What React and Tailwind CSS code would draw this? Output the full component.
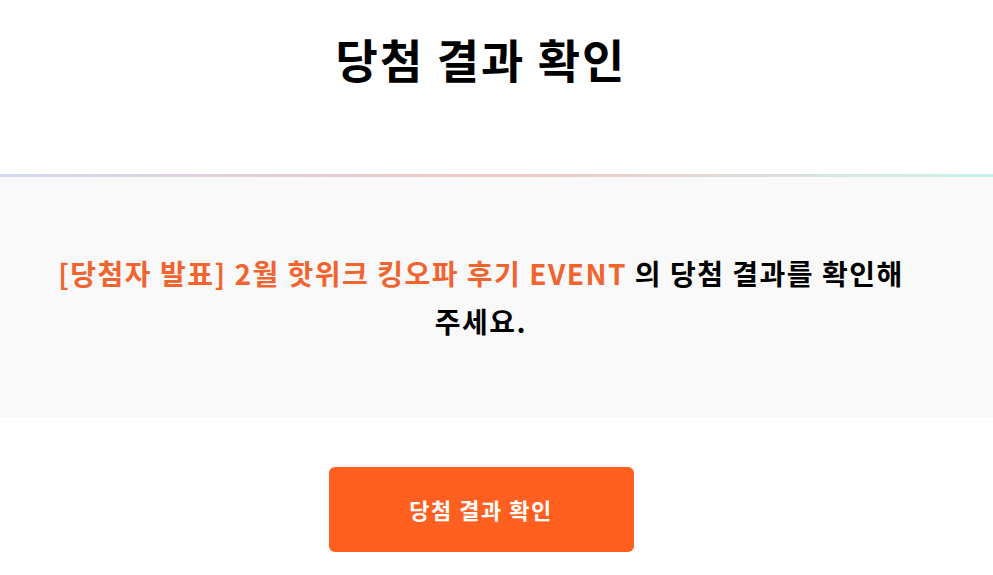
import React from "react";

const font = {
  fontFamily: '"Noto Sans CJK KR", "Noto Sans", sans-serif',
};

export default function App() {
  return (
    <div className="w-[993px] min-h-[575px] bg-white" style={font}>
      <div className="w-[962px] pt-[25px] pb-[83px] text-center">
        <h1 className="text-[46px] leading-[66px] font-bold tracking-[2px] text-black">당첨 결과 확인</h1>
      </div>

      <div className="h-[3px] w-full bg-gradient-to-r from-[#d1d9ef] via-[#f2c5c1] to-[#c5f3ee]" />

      <section className="bg-[#f9f9f9] py-[72px]">
        <div className="w-[962px]">
          <p className="mx-auto max-w-[870px] text-center text-[28px] leading-[48px] font-semibold tracking-[1.5px] text-black">
            <span className="text-[#f1632f]">[당첨자 발표] 2월 핫위크 킹오파 후기 EVENT</span> 의 당첨 결과를 확인해
            주세요.
          </p>
        </div>
      </section>

      <div className="w-[962px] pt-[50px] flex justify-center">
        <button className="w-[305px] h-[85px] rounded-md bg-[#ff5f1f] text-white text-[22px] font-bold tracking-[1.5px]">
          당첨 결과 확인
        </button>
      </div>
    </div>
  );
}
